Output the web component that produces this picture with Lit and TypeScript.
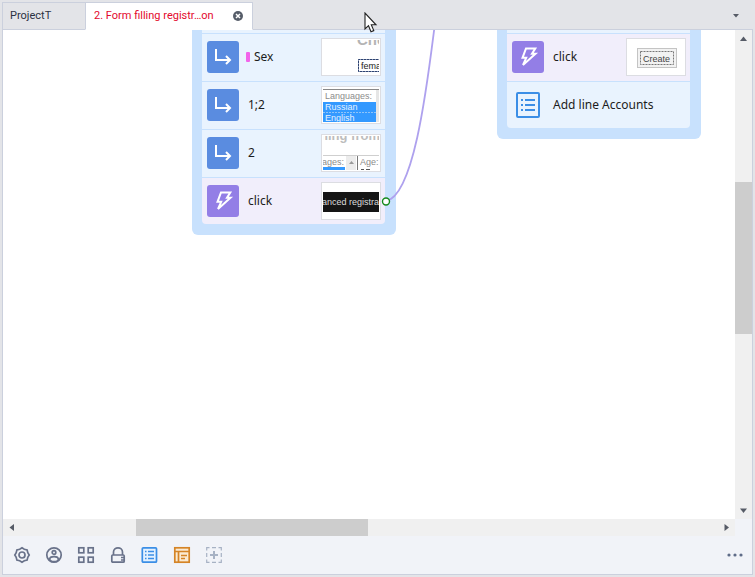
import { LitElement, html, css, svg, nothing, type TemplateResult } from "lit";
import { customElement, property } from "lit/decorators.js";
import { classMap } from "lit/directives/class-map.js";
import { styleMap } from "lit/directives/style-map.js";

type Kind = "value" | "action" | "list" | "blank";

interface Step {
  kind: Kind;
  label?: string;
  marked?: boolean;
  preview?: TemplateResult;
}

const frame = (content: TemplateResult) => html`
  <svg width="56" height="34" viewBox="0 0 56 34" font-family="Liberation Sans, Arial, sans-serif" font-size="9">${content}</svg>`;

const sexPreview = frame(svg`
  <text x="34" y="5" font-size="15" font-weight="700" fill="#b4b4b4">Cho</text>
  <path d="M58 19.500H35.500V31.500H58" fill="none" stroke="#8795b3"/>
  <path d="M58 19.500H35.500V31.500H58" fill="none" stroke="#2d4270" stroke-dasharray="2 1"/>
  <text x="38" y="29" fill="#222">fema</text>`);

const languagesPreview = frame(svg`
  <path d="M0 1.500H56" stroke="#888"/>
  <rect x="53" y="2" width="3" height="32" fill="#e6e6e6"/>
  <text x="2" y="11" fill="#8c8c8c">Languages:</text>
  <rect y="14" width="53" height="20" fill="#3399ff"/>
  <path d="M0 24.500H53" stroke="#8fc4f8" stroke-dasharray="2 1"/>
  <text x="2" y="22" fill="#e4f1ff">Russian</text>
  <text x="2" y="33" fill="#e4f1ff">English</text>`);

const agePreview = frame(svg`
  <text x="-3" y="4" font-size="13" font-weight="700" fill="#bdbdbd">ning from</text>
  <path d="M0 19.500H56" stroke="#cfcfcf"/>
  <text x="-1" y="29" fill="#8c8c8c">ages:</text>
  <rect y="31" width="22" height="3" fill="#3399ff"/>
  <rect x="23" y="20" width="10" height="14" fill="#ececec"/>
  <path d="M26 28L28.500 25L31 28Z" fill="#999"/>
  <path d="M34.500 20V34" stroke="#777"/>
  <text x="37" y="29" fill="#8c8c8c">Age:</text>
  <path d="M38 33.500H41M43 33.500H47" stroke="#555"/>`);

const registrationPreview = frame(svg`
  <rect y="8" width="56" height="20" fill="#151515"/>
  <text x="-1" y="21" fill="#dcdcdc">anced registra</text>`);

const createPreview = frame(svg`
  <rect x="9.500" y="8.500" width="39" height="19" fill="#f2f2f2" stroke="#c4c4c4"/>
  <rect x="12.500" y="11.500" width="33" height="13" fill="none" stroke="#777" stroke-dasharray="2 1"/>
  <text x="15" y="22" fill="#444">Create</text>`);

const stepIcons: Record<Kind, TemplateResult | typeof nothing> = {
  blank: nothing,
  value: html`<svg class="icon" viewBox="0 0 32 32"><path d="M9 8V19H22.500M19 15L23 19L19 23" fill="none" stroke="#fff" stroke-width="2"/></svg>`,
  action: html`<svg class="icon" viewBox="0 0 32 32"><path d="M14 7.500H23.300L20 12.700H23.500L11 24L14.200 16.800H10.500Z" fill="none" stroke="#fff" stroke-width="2"/></svg>`,
  list: html`<svg class="icon" viewBox="0 0 32 32" fill="none" stroke="#3b8ee6" stroke-width="2"><rect x="5" y="4" width="22" height="24" rx="1"/><path d="M9 11H11M13 11H23M9 16H11M13 16H23M9 21H11M13 21H23"/></svg>`,
};

@customElement("step-card")
export class StepCard extends LitElement {
  @property({ attribute: false }) steps: Step[] = [];

  static styles = css`
    :host {
      display: block;
      box-sizing: border-box;
      width: 204px;
      padding: 10px 11px 11px 10px;
      border-radius: 6px;
      background: #c8e1fd;
    }
    ul { list-style: none; margin: 0; padding: 0; border-radius: 4px; overflow: hidden; }
    .step {
      display: flex;
      align-items: center;
      box-sizing: border-box;
      height: 48px;
      padding: 0 4px 1px 5px;
      background: #e9f3fe;
      border-top: 1px solid #c8e1fd;
      font: 12px/16px "Noto Sans", sans-serif;
      color: #1c1c20;
    }
    .step:last-child { height: 47px; padding-bottom: 0; }
    .action { background: #f1eefb; }
    .tile { flex: none; width: 32px; height: 32px; border-radius: 3px; margin-right: 9px; }
    .value .tile { background: #5a8ce0; }
    .action .tile { background: #937ee6; }
    .icon { display: block; width: 32px; height: 32px; }
    .label { flex: 1; white-space: nowrap; }
    .marked .tile { margin-right: 7px; }
    .mark { width: 4px; height: 10px; border-radius: 1px; background: #f264ea; margin-right: 4px; }
    .preview {
      flex: none;
      box-sizing: border-box;
      width: 60px;
      height: 38px;
      padding: 1px;
      border: 1px solid #dcdde2;
      background: #fff;
    }
    .preview svg { display: block; overflow: hidden; }
  `;

  render() {
    return html`<ul>
      ${this.steps.map(
        (s) => html`<li class=${classMap({ step: true, [s.kind]: true, marked: !!s.marked })}>
          ${s.kind === "blank"
            ? nothing
            : html`<span class="tile">${stepIcons[s.kind]}</span>
                ${s.marked ? html`<span class="mark"></span>` : nothing}
                <span class="label">${s.label}</span>
                ${s.preview ? html`<span class="preview">${s.preview}</span>` : nothing}`}
        </li>`
      )}
    </ul>`;
  }
}

@customElement("scroll-track")
export class ScrollTrack extends LitElement {
  @property({ type: Boolean, reflect: true }) vertical = false;
  @property({ type: Number }) start = 0;
  @property({ type: Number }) size = 100;

  static styles = css`
    :host { display: flex; background: #f0f0f0; height: 17px; }
    :host([vertical]) { flex-direction: column; width: 17px; height: auto; }
    button { flex: none; width: 17px; height: 17px; padding: 0; border: 0; background: none; }
    svg { display: block; width: 17px; height: 17px; fill: #565b66; }
    .track { display: flex; flex: 1; min-width: 0; min-height: 0; }
    :host([vertical]) .track { flex-direction: column; }
    .thumb { background: #cdcdcd; }
  `;

  render() {
    const back = this.vertical ? "M5 11H12L8.500 6.500Z" : "M11 5V12L6.500 8.500Z";
    const ahead = this.vertical ? "M5 6.500H12L8.500 11Z" : "M6.500 5V12L11 8.500Z";
    return html`
      <button aria-label="Scroll back"><svg viewBox="0 0 17 17"><path d=${back} /></svg></button>
      <div class="track">
        <div style=${styleMap({ flexGrow: String(this.start) })}></div>
        <div class="thumb" style=${styleMap({ flexGrow: String(this.size) })}></div>
        <div style=${styleMap({ flexGrow: String(100 - this.start - this.size) })}></div>
      </div>
      <button aria-label="Scroll forward"><svg viewBox="0 0 17 17"><path d=${ahead} /></svg></button>
    `;
  }
}

interface Tool {
  name: string;
  tone: string;
  art: TemplateResult;
}

const tools: Tool[] = [
  {
    name: "Settings",
    tone: "slate",
    art: svg`<path d="M8 .8L10.300 2.200L13.100 2.900L13.800 5.700L15.200 8L13.800 10.300L13.100 13.100L10.300 13.800L8 15.200L5.700 13.800L2.900 13.100L2.200 10.300L.8 8L2.200 5.700L2.900 2.900L5.700 2.200Z"/><circle cx="8" cy="8" r="3"/>`,
  },
  {
    name: "Profile",
    tone: "slate",
    art: svg`<circle cx="8" cy="8" r="7.200"/><circle cx="8" cy="5.500" r="1.800"/><ellipse cx="8" cy="12.200" rx="4.300" ry="2.500"/>`,
  },
  {
    name: "Blocks",
    tone: "slate",
    art: svg`<rect x=".8" y=".8" width="5" height="5"/><rect x="10.200" y=".8" width="5" height="5"/><rect x=".8" y="10.200" width="5" height="5"/><rect x="10.200" y="10.200" width="5" height="5"/>`,
  },
  {
    name: "Lock",
    tone: "slate",
    art: svg`<path d="M3.500 8V5C3.500 -.6 12.500 -.6 12.500 5V8"/><rect x="1.800" y="8" width="12.400" height="7.200" rx="1"/><path d="M11 10.500H14M11 13H14" stroke-width="1.300"/>`,
  },
  {
    name: "Lists",
    tone: "blue",
    art: svg`<rect x=".3" y=".8" width="14.200" height="14.400" rx="1" fill="#e4f1ff"/><path d="M3 4.500H4.500M6 4.500H12M3 8H4.500M6 8H12M3 11.500H4.500M6 11.500H12"/>`,
  },
  {
    name: "Templates",
    tone: "orange",
    art: svg`<rect x=".8" y=".8" width="14.400" height="14.400" fill="#fbead2"/><path d="M1 4.500H15M4.500 4.500V15M7 8.500H13M7 11.500H11"/>`,
  },
  {
    name: "Add",
    tone: "pale",
    art: svg`<path d="M.7 3.500V.7H3.500M6 .7H10M12.500 .7H15.300V3.500M15.300 6V10M15.300 12.500V15.300H12.500M10 15.300H6M3.500 15.300H.7V12.500M.7 10V6" stroke-width="1.200"/><path d="M8 4V12M4 8H12" stroke-width="2"/>`,
  },
];

@customElement("app-root")
export class AppRoot extends LitElement {
  static styles = css`
    :host {
      display: flex;
      flex-direction: column;
      box-sizing: border-box;
      height: 100vh;
      padding: 2px;
      background: #e3e4e8;
      font: 11px/14px Roboto, "Noto Sans", sans-serif;
      color: #2b3142;
    }
    svg { display: block; }
    button { padding: 0; border: 0; background: none; font: inherit; color: inherit; }
    .tabs { display: flex; flex: none; height: 28px; }
    .tab {
      display: flex;
      align-items: center;
      box-sizing: border-box;
      height: 28px;
      border: 1px solid #cbd0dd;
      white-space: nowrap;
    }
    .idle { width: 84px; padding-left: 7px; border-right: 0; }
    .current {
      width: 168px;
      padding: 0 8px;
      margin-left: -1px;
      background: #fff;
      border-bottom-color: #fff;
      color: #e3092d;
      justify-content: space-between;
      position: relative;
      z-index: 1;
    }
    .rest { display: flex; flex: 1; justify-content: flex-end; align-items: center; padding-right: 13px; border-bottom: 1px solid #cbd0dd; }
    .panel {
      display: flex;
      flex: 1;
      flex-direction: column;
      min-height: 0;
      border: 1px solid #cbd0dd;
      border-top: 0;
      background: #f1f3f8;
    }
    .view { flex: 1; min-height: 0; display: grid; grid-template: minmax(0, 1fr) 17px / minmax(0, 1fr) 17px; }
    .canvas { position: relative; overflow: hidden; background: #fff; }
    .node { position: absolute; top: -55px; }
    .form { left: 189px; }
    .accounts { left: 494px; }
    .link { position: absolute; top: 0; left: 0; }
    .tools { display: flex; flex: none; align-items: center; height: 38px; padding: 0 9px 0 3px; }
    .tool { display: grid; place-items: center; width: 32px; height: 32px; }
    .tool svg { fill: none; stroke: currentColor; stroke-width: 1.7; overflow: visible; }
    .slate { color: #69728a; }
    .blue { color: #3b8ee6; }
    .orange { color: #d58427; }
    .pale { color: #a7b2c4; }
    .more { margin-left: auto; color: #5f6c88; }
    .pointer { position: absolute; left: 364px; top: 12px; z-index: 2; }
  `;

  private form: Step[] = [
    { kind: "blank" },
    { kind: "value", label: "Sex", marked: true, preview: sexPreview },
    { kind: "value", label: "1;2", preview: languagesPreview },
    { kind: "value", label: "2", preview: agePreview },
    { kind: "action", label: "click", preview: registrationPreview },
  ];

  private accounts: Step[] = [
    { kind: "blank" },
    { kind: "action", label: "click", preview: createPreview },
    { kind: "list", label: "Add line Accounts" },
  ];

  render() {
    return html`
      <div class="tabs">
        <button class="tab idle">ProjectT</button>
        <div class="tab current">
          <span>2. Form filling registr…on</span>
          <button aria-label="Close tab">
            <svg width="12" height="12" viewBox="0 0 12 12"><circle cx="6" cy="6" r="5" fill="#565d69"/><path d="M4 4L8 8M8 4L4 8" stroke="#fff" stroke-width="1.500"/></svg>
          </button>
        </div>
        <div class="rest">
          <button aria-label="Tab list"><svg width="8" height="4" viewBox="0 0 8 4"><path d="M1 0H7L4 3.500Z" fill="#565b66"/></svg></button>
        </div>
      </div>
      <div class="panel">
        <div class="view">
          <main class="canvas">
            <step-card class="node form" .steps=${this.form}></step-card>
            <step-card class="node accounts" .steps=${this.accounts}></step-card>
            <svg class="link" width="500" height="200" fill="none">
              <path d="M383 171C411 166 424 56 431.500 -3" stroke="#aea1ee" stroke-width="1.800"/>
              <circle cx="383" cy="171.500" r="3.500" fill="#fff" stroke="#168a1c" stroke-width="1.400"/>
            </svg>
          </main>
          <scroll-track vertical start="29.700" size="33.400"></scroll-track>
          <scroll-track start="16.600" size="33.200"></scroll-track>
        </div>
        <div class="tools">
          ${tools.map(
            (t) => html`<button class="tool ${t.tone}" aria-label=${t.name}><svg width="16" height="16" viewBox="0 0 16 16">${t.art}</svg></button>`
          )}
          <button class="more" aria-label="More"><svg width="16" height="4" viewBox="0 0 16 4" fill="currentColor"><circle cx="2" cy="2" r="1.600"/><circle cx="8" cy="2" r="1.600"/><circle cx="14" cy="2" r="1.600"/></svg></button>
        </div>
      </div>
      <svg class="pointer" width="14" height="22" viewBox="0 0 14 22"><path d="M1 1V17L4.500 13.700L7 19.800L9.800 18.600L7.300 12.800H12Z" fill="#fff" stroke="#222" stroke-width="1.100"/></svg>
    `;
  }
}
